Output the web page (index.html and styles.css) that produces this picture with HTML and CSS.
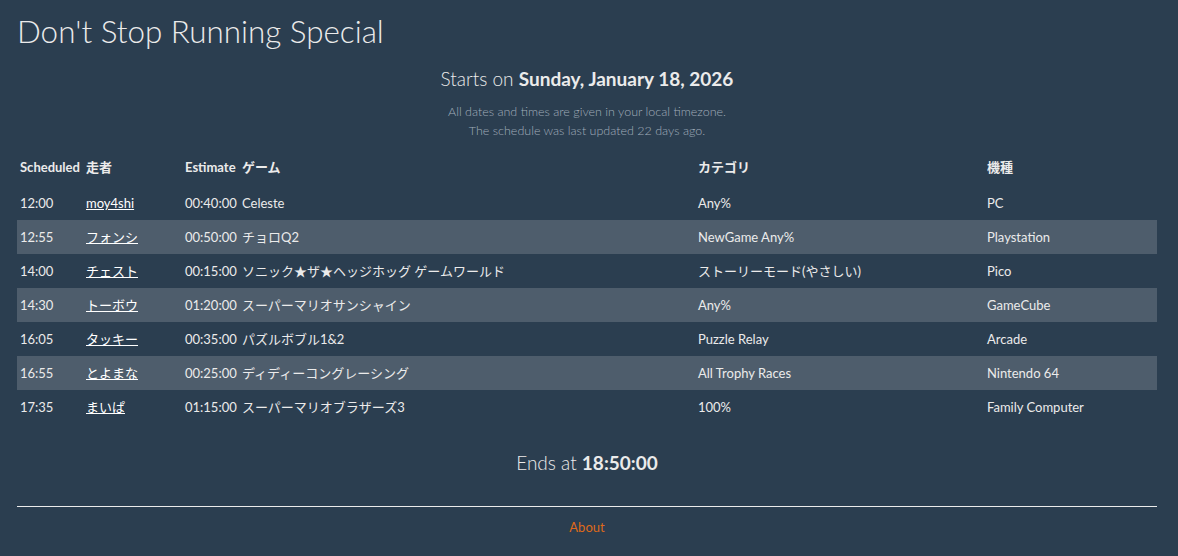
FILE: index.html
```html
<!DOCTYPE html>
<html lang="ja">
<head>
<meta charset="utf-8">
<title>Don't Stop Running Special</title>
<link rel="stylesheet" href="styles.css">
</head>
<body>
<div class="page">
  <h1 class="title">Don't Stop Running Special</h1>
  <p class="starts">Starts on <strong>Sunday, January 18, 2026</strong></p>
  <p class="note">All dates and times are given in your local timezone.<br>The schedule was last updated 22 days ago.</p>
  <table class="schedule">
    <thead>
      <tr>
        <th class="c-sched">Scheduled</th>
        <th class="c-runner">走者</th>
        <th class="c-est">Estimate</th>
        <th class="c-game">ゲーム</th>
        <th class="c-cat">カテゴリ</th>
        <th class="c-plat">機種</th>
      </tr>
    </thead>
    <tbody>
      <tr><td>12:00</td><td><a href="#">moy4shi</a></td><td>00:40:00</td><td>Celeste</td><td>Any%</td><td>PC</td></tr>
      <tr><td>12:55</td><td><a href="#">フォンシ</a></td><td>00:50:00</td><td>チョロQ2</td><td>NewGame Any%</td><td>Playstation</td></tr>
      <tr><td>14:00</td><td><a href="#">チェスト</a></td><td>00:15:00</td><td>ソニック★ザ★ヘッジホッグ ゲームワールド</td><td>ストーリーモード(やさしい)</td><td>Pico</td></tr>
      <tr><td>14:30</td><td><a href="#">トーボウ</a></td><td>01:20:00</td><td>スーパーマリオサンシャイン</td><td>Any%</td><td>GameCube</td></tr>
      <tr><td>16:05</td><td><a href="#">タッキー</a></td><td>00:35:00</td><td>パズルボブル1&amp;2</td><td>Puzzle Relay</td><td>Arcade</td></tr>
      <tr><td>16:55</td><td><a href="#">とよまな</a></td><td>00:25:00</td><td>ディディーコングレーシング</td><td>All Trophy Races</td><td>Nintendo 64</td></tr>
      <tr><td>17:35</td><td><a href="#">まいぱ</a></td><td>01:15:00</td><td>スーパーマリオブラザーズ3</td><td>100%</td><td>Family Computer</td></tr>
    </tbody>
  </table>
  <p class="ends">Ends at <strong>18:50:00</strong></p>
  <hr class="rule">
  <footer class="footer"><a href="#">About</a></footer>
</div>
</body>
</html>
```

FILE: styles.css
```css
html, body {
  margin: 0;
  padding: 0;
  background: #2b3e50;
}
body {
  font-family: Lato, "Noto Sans CJK JP", sans-serif;
  font-size: 13px;
  line-height: 18px;
  color: #ebebeb;
}
.page {
  padding: 13px 21px 0 17px;
}
.title {
  margin: 0;
  font-size: 31.4px;
  line-height: 36px;
  font-weight: 300;
  color: #ebebeb;
}
.starts {
  margin: 19px 0 0;
  text-align: center;
  font-size: 19px;
  line-height: 22px;
  font-weight: 300;
}
.starts strong {
  font-weight: 700;
}
.note {
  margin: 12px 0 0;
  text-align: center;
  font-size: 12.5px;
  line-height: 19px;
  font-weight: 300;
  color: #a0adba;
}
.schedule {
  margin-top: 10px;
  width: 1140px;
  border-collapse: collapse;
  table-layout: fixed;
}
.schedule th,
.schedule td {
  text-align: left;
  padding: 8px 3px;
  vertical-align: top;
  white-space: nowrap;
}
.schedule th {
  font-weight: 700;
  border-bottom: 2px solid transparent;
}
.schedule td {
  font-weight: 400;
}
.schedule tbody tr:nth-child(even) {
  background: #4e5d6c;
}
.schedule a {
  color: #ffffff;
  text-decoration: underline;
}
.c-sched { width: 60px; }
.c-runner { width: 93px; }
.c-est { width: 51px; }
.c-game { width: 450px; }
.c-cat { width: 283px; }
.c-plat { width: 167px; }
.ends {
  margin: 28px 0 0;
  text-align: center;
  font-size: 19px;
  line-height: 22px;
  font-weight: 300;
}
.ends strong {
  font-weight: 700;
}
.rule {
  margin: 32px 0 0;
  border: 0;
  height: 1px;
  background: #ebebeb;
}
.footer {
  margin-top: 11px;
  text-align: center;
  font-weight: 400;
}
.footer a {
  color: #df691a;
  text-decoration: none;
}
```
